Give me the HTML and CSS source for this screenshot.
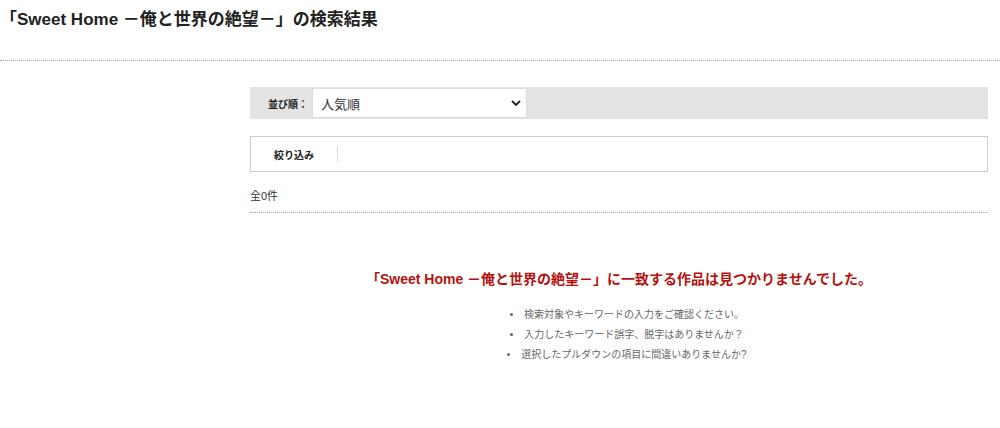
FILE: index.html
```html
<html>
  <head>
    <meta charset="utf-8">
    <link rel="stylesheet" href="styles.css">
  </head>
  <body>
    <div class="page-head">
      <h1 class="page-title">「Sweet Home －俺と世界の絶望－」の検索結果</h1>
    </div>
    <div class="results">
      <form class="sort-bar">
        <label class="sort-label">並び順：</label>
        <div class="select-wrap">
          <select class="sort-select">
            <option>人気順</option>
            <option>新着順</option>
          </select>
          <svg class="select-arrow" width="10" height="6" viewBox="0 0 10 6"><path d="M1 1l4 4 4-4" fill="none" stroke="#222" stroke-width="1.8"/></svg>
        </div>
      </form>
      <div class="filter-box">
        <span class="filter-label">絞り込み</span>
        <span class="filter-sep"></span>
      </div>
      <div class="count">全0件</div>
      <div class="no-result">
        <p class="no-result-title">「Sweet Home －俺と世界の絶望－」に一致する作品は見つかりませんでした。</p>
        <ul class="hints">
          <li>検索対象やキーワードの入力をご確認ください。</li>
          <li>入力したキーワード誤字、脱字はありませんか？</li>
          <li>選択したプルダウンの項目に間違いありませんか?</li>
        </ul>
      </div>
    </div>
  </body>
</html>
```

FILE: styles.css
```css
body {
  margin: 0;
  font-family: "Liberation Sans", "Noto Sans CJK JP", sans-serif;
  color: #333;
  background: #fff;
}
.page-head {
  height: 60px;
  border-bottom: 1px dotted #aaa;
}
.page-title {
  margin: 0;
  padding: 10px 0 0 0;
  font-size: 17px;
  line-height: 20px;
  font-weight: bold;
  color: #222;
}
.results {
  margin: 26px 12px 0 250px;
}
.sort-bar {
  display: flex;
  align-items: center;
  height: 32px;
  margin: 0;
  background: #e3e3e3;
}
.sort-label {
  width: 58px;
  margin-right: 4px;
  text-align: right;
  font-size: 10px;
  font-weight: bold;
  color: #222;
}
.select-wrap {
  position: relative;
  display: flex;
}
.sort-select {
  appearance: none;
  width: 215px;
  height: 30px;
  border: 1px solid #ddd;
  background: #fff;
  padding: 0 8px;
  font-family: "Noto Sans CJK JP", sans-serif;
  font-size: 13px;
  color: #333;
  outline: none;
}
.select-arrow {
  position: absolute;
  right: 6px;
  top: 12px;
}
.filter-box {
  display: flex;
  align-items: center;
  height: 34px;
  margin-top: 17px;
  border: 1px solid #ccc;
}
.filter-label {
  width: 63px;
  text-align: right;
  font-size: 10px;
  font-weight: bold;
  color: #222;
}
.filter-sep {
  width: 1px;
  height: 17px;
  margin-left: 23px;
  background: #ddd;
}
.count {
  margin-top: 17px;
  padding-bottom: 8px;
  font-size: 11px;
  line-height: 15px;
  color: #333;
  border-bottom: 1px dotted #aaa;
}
.no-result {
  text-align: center;
  padding-top: 56px;
}
.no-result-title {
  margin: 0;
  font-size: 14px;
  line-height: 20px;
  font-weight: bold;
  color: #b5120f;
}
.hints {
  margin: 16px 0 0 0;
  padding: 0 0 0 16px;
  list-style-position: inside;
  font-size: 10px;
  line-height: 20px;
  color: #666;
}
```
